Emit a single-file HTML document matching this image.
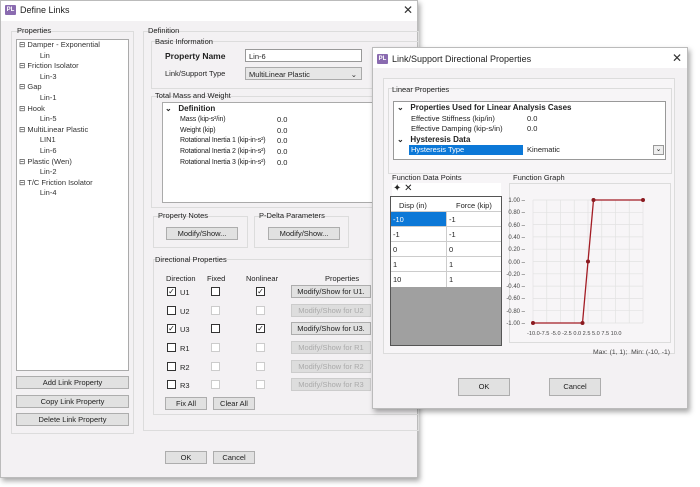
<!DOCTYPE html><html><head><style>
*{box-sizing:border-box;margin:0;padding:0}
body{width:700px;height:487px;background:#fff;position:relative;overflow:hidden;font-family:"Liberation Sans",sans-serif;font-size:7.5px;color:#222}
.a{position:absolute;white-space:nowrap}
.win{position:absolute;background:#f3f1f3;border:1px solid #bbb;box-shadow:2px 3px 5px rgba(0,0,0,.35)}
.tb{position:absolute;left:0;right:0;top:0;height:20px;background:#fff}
.gb{position:absolute;border:1px solid #dcdcdc}
.btn{position:absolute;background:#e1e1e1;border:1px solid #adadad;text-align:center;font-size:7.5px;color:#222;line-height:11px}
.dis{color:#aaa;background:#ddd;border-color:#ccc}
.cb{position:absolute;width:9px;height:9px;border:1px solid #333;background:#fff;font-size:8px;line-height:7px;text-align:center}
.cbd{border-color:#ccc}
.ic{position:absolute;width:11px;height:10px;background:#8a6bb0;color:#fff;font-size:6px;font-weight:bold;text-align:center;line-height:10px;border-radius:1px}
</style></head><body>
<div class="win" style="left:0;top:0;width:418px;height:478px">
<div class="tb"></div>
<div class="ic" style="left:4px;top:4px">PL</div>
<div class="a" style="left:19px;top:4px;font-size:9px">Define Links</div>
<div class="a" style="left:402px;top:2px;font-size:12px;color:#333">✕</div>
<div class="gb" style="left:10px;top:30px;width:123px;height:403px"></div>
<div class="a" style="left:16px;top:25px">Properties</div>
<div class="a" style="left:15px;top:38px;width:113px;height:332px;background:#fff;border:1px solid #aaa"></div>
<div class="a" style="left:18px;top:39px;line-height:10.6px;color:#333">
⊟ Damper - Exponential<br>&nbsp;&nbsp;&nbsp;&nbsp;&nbsp;&nbsp;&nbsp;&nbsp;&nbsp;&nbsp;Lin<br>⊟ Friction Isolator<br>&nbsp;&nbsp;&nbsp;&nbsp;&nbsp;&nbsp;&nbsp;&nbsp;&nbsp;&nbsp;Lin-3<br>⊟ Gap<br>&nbsp;&nbsp;&nbsp;&nbsp;&nbsp;&nbsp;&nbsp;&nbsp;&nbsp;&nbsp;Lin-1<br>⊟ Hook<br>&nbsp;&nbsp;&nbsp;&nbsp;&nbsp;&nbsp;&nbsp;&nbsp;&nbsp;&nbsp;Lin-5<br>⊟ MultiLinear Plastic<br>&nbsp;&nbsp;&nbsp;&nbsp;&nbsp;&nbsp;&nbsp;&nbsp;&nbsp;&nbsp;LIN1<br>&nbsp;&nbsp;&nbsp;&nbsp;&nbsp;&nbsp;&nbsp;&nbsp;&nbsp;&nbsp;Lin-6<br>⊟ Plastic (Wen)<br>&nbsp;&nbsp;&nbsp;&nbsp;&nbsp;&nbsp;&nbsp;&nbsp;&nbsp;&nbsp;Lin-2<br>⊟ T/C Friction Isolator<br>&nbsp;&nbsp;&nbsp;&nbsp;&nbsp;&nbsp;&nbsp;&nbsp;&nbsp;&nbsp;Lin-4</div>
<div class="btn" style="left:15px;top:375px;width:113px;height:13px">Add Link Property</div>
<div class="btn" style="left:15px;top:394px;width:113px;height:13px">Copy Link Property</div>
<div class="btn" style="left:15px;top:412px;width:113px;height:13px">Delete Link Property</div>
<div class="gb" style="left:142px;top:30px;width:276px;height:400px"></div>
<div class="a" style="left:147px;top:25px">Definition</div>
<div class="gb" style="left:150px;top:40px;width:268px;height:48px"></div>
<div class="a" style="left:154px;top:36px">Basic Information</div>
<div class="a" style="left:164px;top:50px;font-weight:bold;font-size:8.5px">Property Name</div>
<div class="a" style="left:244px;top:48px;width:117px;height:13px;background:#fff;border:1px solid #999;padding:2px 3px">Lin-6</div>
<div class="a" style="left:164px;top:68px">Link/Support Type</div>
<div class="a" style="left:244px;top:66px;width:117px;height:13px;background:#e6e6e6;border:1px solid #aaa;padding:2px 3px">MultiLinear Plastic<span style="position:absolute;right:4px">⌄</span></div>
<div class="gb" style="left:150px;top:95px;width:268px;height:112px"></div>
<div class="a" style="left:154px;top:90px">Total Mass and Weight</div>
<div class="a" style="left:161px;top:101px;width:257px;height:101px;background:#fff;border:1px solid #aaa"></div>
<div class="a" style="left:164px;top:103px;font-weight:bold;font-size:8px">⌄&nbsp;&nbsp;&nbsp;Definition</div>
<div class="a" style="left:179px;top:114px;line-height:10.7px;font-size:7px;letter-spacing:-0.15px">Mass (kip-s²/in)<br>Weight (kip)<br>Rotational Inertia 1 (kip-in-s²)<br>Rotational Inertia 2 (kip-in-s²)<br>Rotational Inertia 3 (kip-in-s²)</div>
<div class="a" style="left:276px;top:114px;line-height:10.7px">0.0<br>0.0<br>0.0<br>0.0<br>0.0</div>
<div class="gb" style="left:152px;top:215px;width:95px;height:32px"></div>
<div class="a" style="left:157px;top:210px">Property Notes</div>
<div class="btn" style="left:165px;top:226px;width:72px;height:13px">Modify/Show...</div>
<div class="gb" style="left:253px;top:215px;width:95px;height:32px"></div>
<div class="a" style="left:258px;top:210px">P-Delta Parameters</div>
<div class="btn" style="left:267px;top:226px;width:72px;height:13px">Modify/Show...</div>
<div class="gb" style="left:152px;top:258px;width:266px;height:156px"></div>
<div class="a" style="left:154px;top:254px">Directional Properties</div>
<div class="a" style="left:165px;top:273px">Direction</div>
<div class="a" style="left:206px;top:273px">Fixed</div>
<div class="a" style="left:245px;top:273px">Nonlinear</div>
<div class="a" style="left:324px;top:273px">Properties</div>
<div class="cb" style="left:166px;top:286px">✓</div><div class="a" style="left:179px;top:287px">U1</div>
<div class="cb" style="left:210px;top:286px"></div><div class="cb" style="left:255px;top:286px">✓</div>
<div class="btn" style="left:290px;top:284px;width:80px;height:13px">Modify/Show for U1.</div>
<div class="cb" style="left:166px;top:305px"></div><div class="a" style="left:179px;top:306px">U2</div>
<div class="cb cbd" style="left:210px;top:305px"></div><div class="cb cbd" style="left:255px;top:305px"></div>
<div class="btn dis" style="left:290px;top:303px;width:80px;height:13px">Modify/Show for U2</div>
<div class="cb" style="left:166px;top:323px">✓</div><div class="a" style="left:179px;top:324px">U3</div>
<div class="cb" style="left:210px;top:323px"></div><div class="cb" style="left:255px;top:323px">✓</div>
<div class="btn" style="left:290px;top:321px;width:80px;height:13px">Modify/Show for U3.</div>
<div class="cb" style="left:166px;top:342px"></div><div class="a" style="left:179px;top:343px">R1</div>
<div class="cb cbd" style="left:210px;top:342px"></div><div class="cb cbd" style="left:255px;top:342px"></div>
<div class="btn dis" style="left:290px;top:340px;width:80px;height:13px">Modify/Show for R1</div>
<div class="cb" style="left:166px;top:361px"></div><div class="a" style="left:179px;top:362px">R2</div>
<div class="cb cbd" style="left:210px;top:361px"></div><div class="cb cbd" style="left:255px;top:361px"></div>
<div class="btn dis" style="left:290px;top:359px;width:80px;height:13px">Modify/Show for R2</div>
<div class="cb" style="left:166px;top:379px"></div><div class="a" style="left:179px;top:380px">R3</div>
<div class="cb cbd" style="left:210px;top:379px"></div><div class="cb cbd" style="left:255px;top:379px"></div>
<div class="btn dis" style="left:290px;top:377px;width:80px;height:13px">Modify/Show for R3</div>
<div class="btn" style="left:164px;top:396px;width:42px;height:13px">Fix All</div>
<div class="btn" style="left:212px;top:396px;width:42px;height:13px">Clear All</div>
<div class="btn" style="left:164px;top:450px;width:42px;height:13px">OK</div>
<div class="btn" style="left:212px;top:450px;width:42px;height:13px">Cancel</div>
</div>
<div class="win" style="left:372px;top:47px;width:316px;height:362px">
<div class="tb"></div>
<div class="ic" style="left:4px;top:6px">PL</div>
<div class="a" style="left:19px;top:6px;font-size:9px">Link/Support Directional Properties</div>
<div class="a" style="left:299px;top:3px;font-size:12px;color:#333">✕</div>
<div class="gb" style="left:10px;top:30px;width:292px;height:276px;background:#f7f5f7"></div>
<div class="gb" style="left:15px;top:40px;width:284px;height:86px"></div>
<div class="a" style="left:19px;top:37px">Linear Properties</div>
<div class="a" style="left:20px;top:53px;width:273px;height:59px;background:#fff;border:1px solid #999"></div>
<div class="a" style="left:24px;top:55px;font-weight:bold;font-size:8px">⌄&nbsp;&nbsp;&nbsp;Properties Used for Linear Analysis Cases</div>
<div class="a" style="left:38px;top:66px;line-height:10px">Effective Stiffness (kip/in)<br>Effective Damping (kip-s/in)</div>
<div class="a" style="left:154px;top:66px;line-height:10px">0.0<br>0.0</div>
<div class="a" style="left:24px;top:87px;font-weight:bold;font-size:8px">⌄&nbsp;&nbsp;&nbsp;Hysteresis Data</div>
<div class="a" style="left:36px;top:97px;width:114px;height:10px;background:#0c78d7;color:#fff;padding-left:2px">Hysteresis Type</div>
<div class="a" style="left:154px;top:97px">Kinematic</div>
<div class="a" style="left:280px;top:97px;width:11px;height:10px;border:1px solid #999;background:#eee;font-size:7px;text-align:center;line-height:8px">⌄</div>
<div class="a" style="left:19px;top:125px">Function Data Points</div>
<div class="a" style="left:19px;top:135px;width:109px;height:13px;background:#fff"></div>
<div class="a" style="left:20px;top:135px;font-size:10px">✦ ✕</div>
<div class="a" style="left:17px;top:148px;width:112px;height:150px;background:#a0a0a0;border:1px solid #555"></div>
<div class="a" style="left:18px;top:149px;width:110px;height:90px;background:#fff"></div>
<div class="a" style="left:18px;top:149px;width:110px;height:90px">
<div style="height:15px;border-bottom:1px solid #ccc;display:flex"><span style="width:55px;padding:4px 0 0 8px">Disp (in)</span><span style="padding:4px 0 0 10px">Force (kip)</span></div>
<div style="height:15px;border-bottom:1px solid #ccc;display:flex"><span style="width:55px;background:#0c78d7;color:#fff;padding:3px 2px">-10</span><span style="border-left:1px solid #ccc;padding:3px 2px">-1</span></div>
<div style="height:15px;border-bottom:1px solid #ccc;display:flex"><span style="width:55px;padding:3px 2px">-1</span><span style="border-left:1px solid #ccc;padding:3px 2px">-1</span></div>
<div style="height:15px;border-bottom:1px solid #ccc;display:flex"><span style="width:55px;padding:3px 2px">0</span><span style="border-left:1px solid #ccc;padding:3px 2px">0</span></div>
<div style="height:15px;border-bottom:1px solid #ccc;display:flex"><span style="width:55px;padding:3px 2px">1</span><span style="border-left:1px solid #ccc;padding:3px 2px">1</span></div>
<div style="height:15px;display:flex"><span style="width:55px;padding:3px 2px">10</span><span style="border-left:1px solid #ccc;padding:3px 2px">1</span></div>
</div>
<div class="a" style="left:140px;top:125px">Function Graph</div>
<div class="gb" style="left:136px;top:135px;width:162px;height:160px"></div>
<svg class="a" style="left:0;top:0" width="316" height="362" font-family="Liberation Sans" font-size="6" fill="#444">
<g stroke="#e2e2e2" stroke-width="0.7">
<line x1="160" y1="152" x2="160" y2="275"/><line x1="173.75" y1="152" x2="173.75" y2="275"/><line x1="187.5" y1="152" x2="187.5" y2="275"/><line x1="201.25" y1="152" x2="201.25" y2="275"/><line x1="215" y1="152" x2="215" y2="275"/><line x1="228.75" y1="152" x2="228.75" y2="275"/><line x1="242.5" y1="152" x2="242.5" y2="275"/><line x1="256.25" y1="152" x2="256.25" y2="275"/><line x1="270" y1="152" x2="270" y2="275"/>
<line x1="160" y1="152" x2="270" y2="152"/><line x1="160" y1="164.3" x2="270" y2="164.3"/><line x1="160" y1="176.6" x2="270" y2="176.6"/><line x1="160" y1="188.9" x2="270" y2="188.9"/><line x1="160" y1="201.2" x2="270" y2="201.2"/><line x1="160" y1="213.5" x2="270" y2="213.5"/><line x1="160" y1="225.8" x2="270" y2="225.8"/><line x1="160" y1="238.1" x2="270" y2="238.1"/><line x1="160" y1="250.4" x2="270" y2="250.4"/><line x1="160" y1="262.7" x2="270" y2="262.7"/><line x1="160" y1="275" x2="270" y2="275"/>
</g>
<g text-anchor="end"><text x="152" y="154">1.00 –</text><text x="152" y="166">0.80 –</text><text x="152" y="179">0.60 –</text><text x="152" y="191">0.40 –</text><text x="152" y="203">0.20 –</text><text x="152" y="216">0.00 –</text><text x="152" y="228">-0.20 –</text><text x="152" y="240">-0.40 –</text><text x="152" y="252">-0.60 –</text><text x="152" y="265">-0.80 –</text><text x="152" y="277">-1.00 –</text></g>
<text x="154" y="287" font-size="5.6">-10.0-7.5 -5.0 -2.5 0.0 2.5 5.0 7.5 10.0</text>
<polyline points="160,275 209.5,275 215,213.5 220.5,152 270,152" fill="none" stroke="#a31c24" stroke-width="1.3"/>
<g fill="#8b1a20"><circle cx="160" cy="275" r="2"/><circle cx="209.5" cy="275" r="2"/><circle cx="215" cy="213.5" r="2"/><circle cx="220.5" cy="152" r="2"/><circle cx="270" cy="152" r="2"/></g>
<text x="297" y="306" font-size="6.8" text-anchor="end">Max: (1, 1);&#160;&#160;Min: (-10, -1)</text>
</svg>
<div class="btn" style="left:85px;top:330px;width:52px;height:18px;line-height:16px">OK</div>
<div class="btn" style="left:176px;top:330px;width:52px;height:18px;line-height:16px">Cancel</div>
</div>
</body></html>
